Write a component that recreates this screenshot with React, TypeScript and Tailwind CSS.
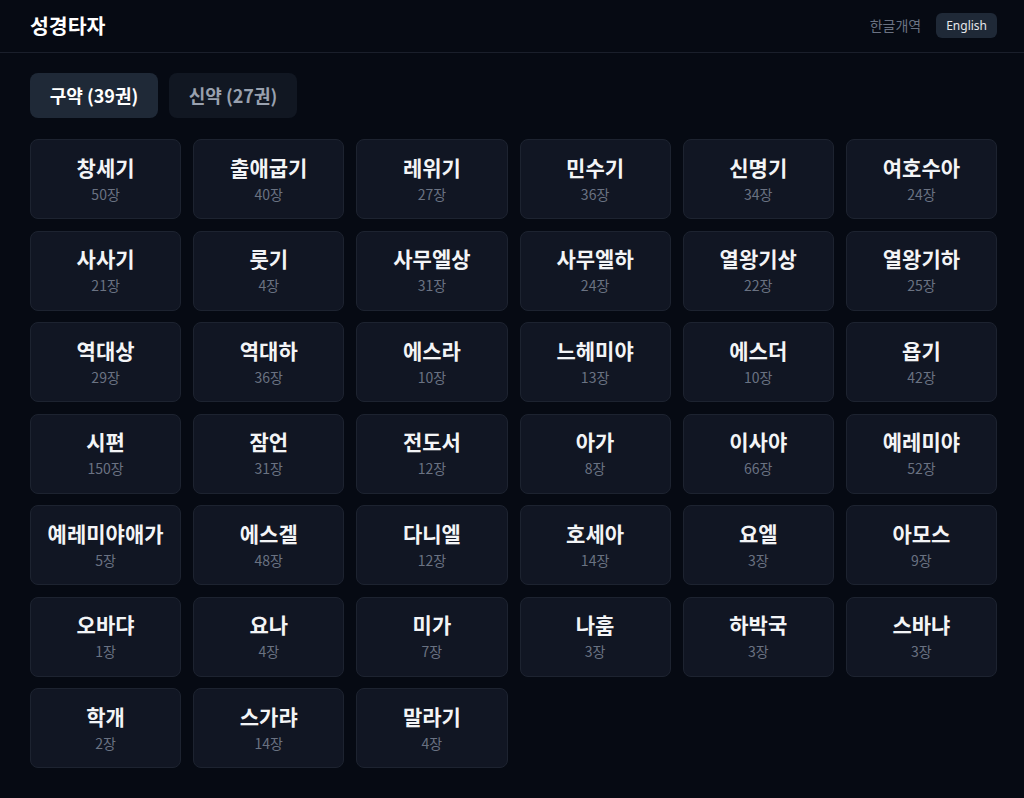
import { useState } from "react";

const oldTestament: [string, number][] = [
    ["창세기", 50], ["출애굽기", 40], ["레위기", 27], ["민수기", 36], ["신명기", 34], ["여호수아", 24],
    ["사사기", 21], ["룻기", 4], ["사무엘상", 31], ["사무엘하", 24], ["열왕기상", 22], ["열왕기하", 25],
    ["역대상", 29], ["역대하", 36], ["에스라", 10], ["느헤미야", 13], ["에스더", 10], ["욥기", 42],
    ["시편", 150], ["잠언", 31], ["전도서", 12], ["아가", 8], ["이사야", 66], ["예레미야", 52],
    ["예레미야애가", 5], ["에스겔", 48], ["다니엘", 12], ["호세아", 14], ["요엘", 3], ["아모스", 9],
    ["오바댜", 1], ["요나", 4], ["미가", 7], ["나훔", 3], ["하박국", 3], ["스바냐", 3],
    ["학개", 2], ["스가랴", 14], ["말라기", 4],
];

const newTestament: [string, number][] = [
    ["마태복음", 28], ["마가복음", 16], ["누가복음", 24], ["요한복음", 21], ["사도행전", 28], ["로마서", 16],
    ["고린도전서", 16], ["고린도후서", 13], ["갈라디아서", 6], ["에베소서", 6], ["빌립보서", 4], ["골로새서", 4],
    ["데살로니가전서", 5], ["데살로니가후서", 3], ["디모데전서", 6], ["디모데후서", 4], ["디도서", 3], ["빌레몬서", 1],
    ["히브리서", 13], ["야고보서", 5], ["베드로전서", 5], ["베드로후서", 3], ["요한일서", 5], ["요한이서", 1],
    ["요한삼서", 1], ["유다서", 1], ["요한계시록", 22],
];

export default function App() {
    const [tab, setTab] = useState<"old" | "new">("old");
    const books = tab === "old" ? oldTestament : newTestament;

    return (
        <div
            className="min-h-screen bg-[#060a13] text-gray-100"
            style={{ fontFamily: '"Noto Sans CJK KR", "Noto Sans", sans-serif' }}
        >
            <header className="border-b border-[#1a1f2b]">
                <div className="pl-[30px] pr-[27px] h-[52px] flex items-center justify-between">
                    <h1 className="text-[20.5px] font-bold leading-[28px] text-white -mt-[2px]">성경타자</h1>
                    <div className="flex items-center gap-[15px] -mt-[1px]">
                        <span className="text-[14px] text-gray-500">한글개역</span>
                        <button
                            className="h-[25px] px-[10px] rounded-md bg-[#1f2937] text-[12px] text-gray-200"
                            style={{ fontFamily: '"Noto Sans", sans-serif' }}
                        >
                            English
                        </button>
                    </div>
                </div>
            </header>

            <main className="pl-[30px] pr-[27px] pt-[20px]">
                <div className="flex gap-[11px]">
                    <button
                        onClick={() => setTab("old")}
                        className={
                            tab === "old"
                                ? "h-[45px] w-[128px] rounded-lg bg-[#1f2937] text-[18px] font-bold text-white"
                                : "h-[45px] w-[128px] rounded-lg bg-[#111722] text-[18px] font-bold text-gray-400"
                        }
                    >
                        구약 (39권)
                    </button>
                    <button
                        onClick={() => setTab("new")}
                        className={
                            tab === "new"
                                ? "h-[45px] w-[128px] rounded-lg bg-[#1f2937] text-[18px] font-bold text-white"
                                : "h-[45px] w-[128px] rounded-lg bg-[#111722] text-[18px] font-bold text-gray-400"
                        }
                    >
                        신약 (27권)
                    </button>
                </div>

                <div className="mt-[21px] grid grid-cols-6 gap-x-[12px] gap-y-[11.5px]">
                    {books.map(([name, chapters]) => (
                        <button
                            key={name}
                            className="h-[80px] pb-[2px] rounded-lg border border-[#1d2330] bg-[#111623] flex flex-col items-center justify-center gap-[3px] hover:bg-[#1a2030]"
                        >
                            <span className="text-[21px] font-bold leading-[28px] text-gray-100">{name}</span>
                            <span className="text-[14px] leading-[20px] text-gray-500">{chapters}장</span>
                        </button>
                    ))}
                </div>
            </main>
        </div>
    );
}
